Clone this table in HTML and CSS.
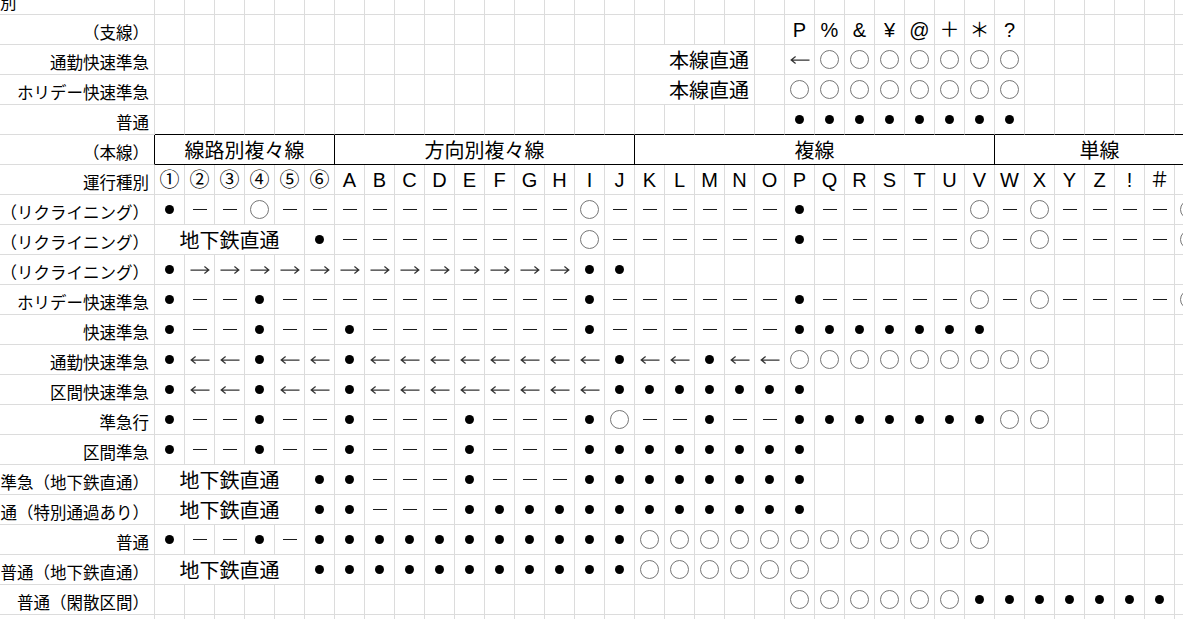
FILE: index.html
```
<!DOCTYPE html>
<html lang="ja">
<head>
<meta charset="utf-8">
<title>運行種別</title>
<link rel="stylesheet" href="styles.css">
</head>
<body>
<div class="sheet" id="sheet"></div>
<script src="script.js"></script>
</body>
</html>
```

FILE: styles.css
```
html, body {
  margin: 0;
  padding: 0;
  background: #ffffff;
  overflow: hidden;
}
body {
  font-family: "Noto Sans CJK JP", sans-serif;
  color: #000000;
}
.sheet {
  display: grid;
  grid-template-columns: 155px repeat(35, 30px);
  grid-auto-rows: 30px;
  width: max-content;
  margin-top: -15px;
}
.c {
  box-sizing: border-box;
  border-right: 1px solid #dcdcdc;
  border-bottom: 1px solid #dcdcdc;
  display: flex;
  align-items: center;
  justify-content: center;
  white-space: nowrap;
  line-height: 1;
  font-size: 20px;
  min-width: 0;
}
.lab {
  justify-content: flex-end;
  padding-right: 5px;
  padding-top: 5px;
  font-size: 16.5px;
}
.lab.first {
  justify-content: flex-start;
  padding-right: 0;
}
.txt {
  font-family: "Liberation Sans", "Noto Sans CJK JP", sans-serif;
  font-size: 20px;
}
.big {
  font-size: 20px;
}
.right {
  justify-content: flex-end;
  padding-right: 5px;
}
.s4 { grid-column: span 4; }
.s5 { grid-column: span 5; }
.s6 { grid-column: span 6; }
.s7 { grid-column: span 7; }
.s10 { grid-column: span 10; }
.s12 { grid-column: span 12; }
.bb { border-bottom-color: #000000; }
.br { border-right-color: #000000; }
.dot {
  display: block;
  width: 9px;
  height: 9px;
  border-radius: 50%;
  background: #000000;
}
.ring {
  display: block;
  box-sizing: border-box;
  width: 19px;
  height: 19px;
  border-radius: 50%;
  border: 1.2px solid #767676;
}
.dash {
  display: block;
  width: 14px;
  height: 1.5px;
  background: #1c1c1c;
}
.arrow {
  display: block;
  width: 20px;
  height: 10px;
}
```

FILE: script.js
```
(function () {
  var sheet = document.getElementById('sheet');
  var r = function (ch, n) { return ch.repeat(n); };
  var M = function (n, t, c) { return { m: n, t: t, c: c }; };
  var seq = function (s) { return Array.from(s); };
  var chars = function (s) { return Array.from(s).map(function (ch) { return { t: ch }; }); };

  var labels = [
    '別', '（支線）', '通勤快速準急', 'ホリデー快速準急', '普通', '（本線）', '運行種別',
    '（リクライニング）', '（リクライニング）', '（リクライニング）', 'ホリデー快速準急',
    '快速準急', '通勤快速準急', '区間快速準急', '準急行', '区間準急', '準急（地下鉄直通）',
    '通（特別通過あり）', '普通', '普通（地下鉄直通）', '普通（閑散区間）', ''
  ];

  var rows = [
    seq(r('.', 35)),
    [].concat(seq(r('.', 21)), chars('P%&¥@＋＊?'), seq(r('.', 6))),
    [].concat(seq(r('.', 16)), [M(4, '本線直通', 'big right')], seq('.<'), seq(r('o', 7)), seq(r('.', 6))),
    [].concat(seq(r('.', 16)), [M(4, '本線直通', 'big right')], seq('.'), seq(r('o', 8)), seq(r('.', 6))),
    [].concat(seq(r('.', 21)), seq(r('*', 8)), seq(r('.', 6))),
    [M(6, '線路別複々線', 'big'), M(10, '方向別複々線', 'big'), M(12, '複線', 'big'), M(7, '単線', 'big')],
    [].concat(chars('①②③④⑤⑥ABCDEFGHIJKLMNOPQRSTUVWXYZ!＃'), seq('.')),
    seq('*--o' + r('-', 10) + 'o' + r('-', 6) + '*' + r('-', 5) + 'o-o' + r('-', 4) + 'o'),
    [].concat([M(5, '地下鉄直通', 'big')], seq('*' + r('-', 8) + 'o' + r('-', 6) + '*' + r('-', 5) + 'o-o' + r('-', 4) + 'o')),
    seq('*' + r('>', 13) + '**' + r('.', 19)),
    seq('*--*' + r('-', 10) + '*' + r('-', 6) + '*' + r('-', 5) + 'o-o' + r('-', 4) + 'o'),
    seq('*--*--*' + r('-', 7) + '*' + r('-', 6) + r('*', 7) + r('.', 7)),
    seq('*<<*<<*' + r('<', 8) + '*<<*<<' + r('o', 9) + r('.', 5)),
    seq('*<<*<<*' + r('<', 8) + r('*', 7) + r('.', 13)),
    seq('*--*--*' + '---*---*' + 'o--*--' + r('*', 7) + 'oo' + r('.', 5)),
    seq('*--*--*' + '---*---' + r('*', 8) + r('.', 13)),
    [].concat([M(5, '地下鉄直通', 'big')], seq('**' + '---*---' + r('*', 8) + r('.', 13))),
    [].concat([M(5, '地下鉄直通', 'big')], seq('**' + '---' + r('*', 12) + r('.', 13))),
    seq('*--*-' + r('*', 11) + r('o', 12) + r('.', 7)),
    [].concat([M(5, '地下鉄直通', 'big')], seq(r('*', 11) + r('o', 6) + r('.', 13))),
    seq(r('.', 21) + r('o', 6) + r('*', 7) + '.'),
    seq(r('.', 35))
  ];

  var LEFT = '<svg class="arrow" viewBox="0 0 20 10"><path d="M1.2 5H19.5M5.6 1.6L1.2 5L5.6 8.4" fill="none" stroke="#333" stroke-width="1.25"/></svg>';
  var RIGHT = '<svg class="arrow" viewBox="0 0 20 10"><path d="M0.5 5H18.8M14.4 1.6L18.8 5L14.4 8.4" fill="none" stroke="#333" stroke-width="1.25"/></svg>';

  var frag = document.createDocumentFragment();
  rows.forEach(function (row, ri) {
    var lab = document.createElement('div');
    lab.className = 'c lab' + (ri === 0 ? ' first' : '') + (ri === 5 ? ' br' : '');
    lab.textContent = labels[ri];
    frag.appendChild(lab);
    row.forEach(function (tok) {
      var d = document.createElement('div');
      var cls = 'c';
      if (typeof tok === 'string') {
        if (tok === '*') d.innerHTML = '<i class="dot"></i>';
        else if (tok === 'o') d.innerHTML = '<i class="ring"></i>';
        else if (tok === '-') d.innerHTML = '<i class="dash"></i>';
        else if (tok === '<') d.innerHTML = LEFT;
        else if (tok === '>') d.innerHTML = RIGHT;
      } else if (tok.m) {
        cls += ' s' + tok.m + ' ' + tok.c;
        if (ri === 5) cls += ' bb br';
        d.textContent = tok.t;
      } else {
        cls += ' txt';
        d.textContent = tok.t;
      }
      if (ri === 4) cls += ' bb';
      d.className = cls;
      frag.appendChild(d);
    });
  });
  sheet.appendChild(frag);
})();
```
